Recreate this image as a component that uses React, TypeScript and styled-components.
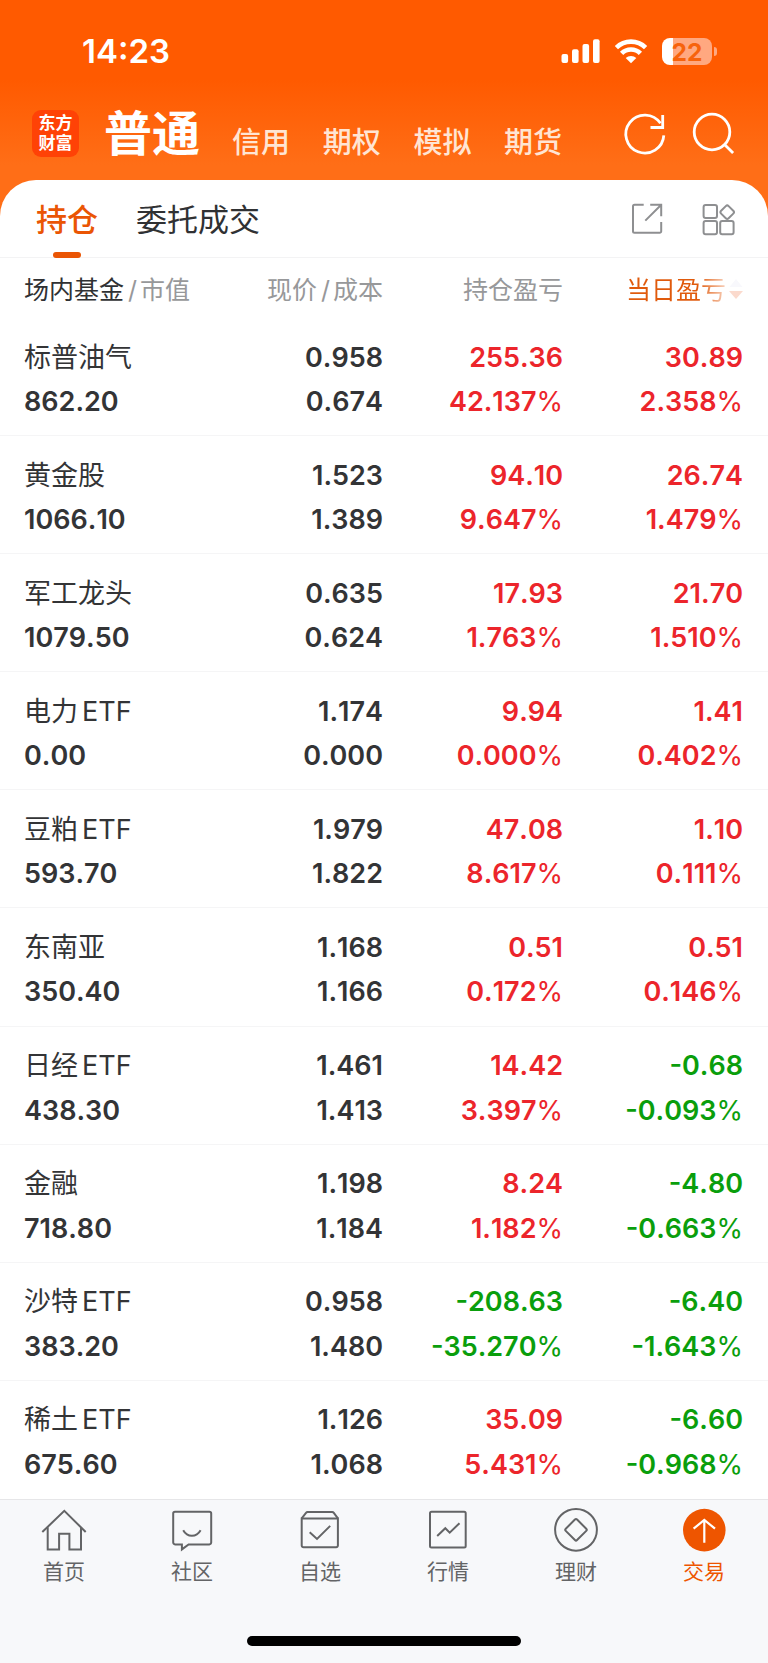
import React from 'react';
import styled, { createGlobalStyle } from 'styled-components';

const GlobalStyle = createGlobalStyle`
  * { box-sizing: border-box; }
  body {
    margin: 0;
    background: #fff;
    font-family: Inter, "Noto Sans CJK SC", sans-serif;
    color: #303133;
  }
`;

const Screen = styled.div`
  width: 768px;
  height: 1663px;
  display: flex;
  flex-direction: column;
  overflow: hidden;
  background: linear-gradient(#ff5a00 0, #ff5a00 80px, #ff6e17 165px, #ff6e17 300px);
`;

const StatusBar = styled.div`
  height: 102px;
  flex: none;
  display: flex;
  justify-content: space-between;
  align-items: center;
  padding: 0 51px 0 82px;
  color: #fff;
`;

const Clock = styled.div`
  font-size: 33px;
  font-weight: 600;
  line-height: 40px;
`;

const StatusIcons = styled.div`
  display: flex;
  align-items: center;
  gap: 14px;
`;

const Battery = styled.div`
  display: flex;
  align-items: center;
  gap: 2px;
`;

const BatteryBody = styled.div`
  width: 50px;
  height: 27px;
  border-radius: 8px;
  background: linear-gradient(90deg, #fff 11.5px, #ffa880 11.5px);
  color: #f7630c;
  font-size: 24.5px;
  font-weight: 700;
  line-height: 28px;
  text-align: center;
`;

const BatteryTip = styled.div`
  width: 3px;
  height: 9px;
  border-radius: 0 4px 4px 0;
  background: #ffa880;
`;

const AccountBar = styled.header`
  height: 77.5px;
  flex: none;
  display: flex;
  align-items: flex-start;
  padding: 0 33px 0 32px;
  color: #fff;
`;

const Logo = styled.div`
  width: 47px;
  height: 47px;
  margin-top: 8px;
  padding-top: 3px;
  border-radius: 9px;
  background: #ff4206;
  font-size: 17px;
  font-weight: 700;
  line-height: 20px;
  text-align: center;
`;

const AccountTitle = styled.div`
  width: 128px;
  margin: 4px 0 0 25px;
  font-size: 48px;
  font-weight: 700;
  line-height: 56px;
`;

const AccountTab = styled.div`
  width: 90.7px;
  margin-top: 22px;
  font-size: 29px;
  font-weight: 500;
  line-height: 38px;
  color: #ffe5d3;
`;

const HeaderActions = styled.div`
  display: flex;
  gap: 23px;
  margin: 9px 0 0 auto;
`;

const Card = styled.main`
  height: 1319px;
  flex: none;
  background: #fff;
  border-radius: 36px 36px 0 0;
`;

const TabBar = styled.div`
  height: 78px;
  display: flex;
  justify-content: space-between;
  padding: 0 33px 0 36px;
  border-bottom: 1px solid #f3f3f4;
`;

const TabGroup = styled.div`
  display: flex;
  gap: 38px;
`;

const Tab = styled.div<{ $active?: boolean }>`
  display: flex;
  flex-direction: column;
  align-items: center;
  font-size: 31px;
  font-weight: ${(p) => (p.$active ? 500 : 400)};
  line-height: 80px;
  height: 79px;
  color: ${(p) => (p.$active ? '#ea5504' : '#303133')};
  &::after {
    content: '';
    width: 28px;
    height: 6px;
    margin-top: -7.5px;
    border-radius: 3px;
    background: ${(p) => (p.$active ? '#ea5504' : 'transparent')};
  }
`;

const TabActions = styled.div`
  display: flex;
  gap: 36px;
  padding-top: 22px;
`;

const GridRow = styled.div`
  display: grid;
  grid-template-columns: 1fr 180px 180px 180px;
  padding: 0 25px 0 24px;
`;

const TableHead = styled(GridRow)`
  height: 60.5px;
  font-size: 25px;
  line-height: 64px;
  color: #97989a;
`;

const HeadCell = styled.div<{ $right?: boolean }>`
  display: flex;
  justify-content: ${(p) => (p.$right ? 'flex-end' : 'flex-start')};
  height: 64px;
  white-space: nowrap;
`;

const Dark = styled.span`
  color: #303133;
`;

const Slash = styled.span`
  margin: 0 3px 0 4px;
`;

const SortCell = styled.div`
  display: flex;
  justify-content: flex-end;
  align-items: center;
  gap: 3px;
  height: 64px;
`;

const SortLabel = styled.span`
  background: linear-gradient(90deg, #e05a0c 72px, #fbe0d2 103px);
  background-clip: text;
  -webkit-background-clip: text;
  color: transparent;
`;

const HoldingRow = styled(GridRow)`
  height: 118.1px;
  padding-top: 17.5px;
  border-bottom: 1px solid #f5f5f6;
  &:last-child { border-bottom: 0; }
`;

const Cell = styled.div<{ $tone?: string; $right?: boolean }>`
  display: flex;
  flex-direction: column;
  align-items: ${(p) => (p.$right ? 'flex-end' : 'flex-start')};
  color: ${(p) => p.$tone ?? '#333436'};
`;

const Name = styled.div`
  font-size: 27px;
  line-height: 44.5px;
`;

const Latin = styled.span`
  margin-left: 4px;
`;

const Figure = styled.div`
  font-size: 27px;
  font-weight: 600;
  line-height: 44.5px;
  font-kerning: none;
`;

const Percent = styled.span`
  font-weight: 400;
`;

const BottomNav = styled.nav`
  height: 164px;
  flex: none;
  display: flex;
  flex-direction: column;
  align-items: center;
  justify-content: space-between;
  padding-bottom: 17px;
  border-top: 1.5px solid #e6e6e8;
  background: #f7f8fa;
`;

const NavItems = styled.div`
  width: 768px;
  display: grid;
  grid-template-columns: repeat(6, 128px);
`;

const NavItem = styled.div<{ $active?: boolean }>`
  display: flex;
  flex-direction: column;
  align-items: center;
  gap: 2px;
  padding-top: 6px;
  font-size: 21px;
  line-height: 32px;
  color: ${(p) => (p.$active ? '#ee5500' : '#636466')};
  svg { display: block; }
`;

const HomeIndicator = styled.div`
  width: 274px;
  height: 10px;
  border-radius: 5px;
  background: #000;
`;

const RED = '#ec252b';
const GREEN = '#0a9e0c';

const toneOf = (value: string) => (value.startsWith('-') ? GREEN : RED);

type Holding = {
  name: string;
  suffix?: string;
  value: string;
  price: string;
  cost: string;
  total: string;
  totalPct: string;
  day: string;
  dayPct: string;
};

const holdings: Holding[] = [
  { name: '标普油气', value: '862.20', price: '0.958', cost: '0.674', total: '255.36', totalPct: '42.137', day: '30.89', dayPct: '2.358' },
  { name: '黄金股', value: '1066.10', price: '1.523', cost: '1.389', total: '94.10', totalPct: '9.647', day: '26.74', dayPct: '1.479' },
  { name: '军工龙头', value: '1079.50', price: '0.635', cost: '0.624', total: '17.93', totalPct: '1.763', day: '21.70', dayPct: '1.510' },
  { name: '电力', suffix: 'ETF', value: '0.00', price: '1.174', cost: '0.000', total: '9.94', totalPct: '0.000', day: '1.41', dayPct: '0.402' },
  { name: '豆粕', suffix: 'ETF', value: '593.70', price: '1.979', cost: '1.822', total: '47.08', totalPct: '8.617', day: '1.10', dayPct: '0.111' },
  { name: '东南亚', value: '350.40', price: '1.168', cost: '1.166', total: '0.51', totalPct: '0.172', day: '0.51', dayPct: '0.146' },
  { name: '日经', suffix: 'ETF', value: '438.30', price: '1.461', cost: '1.413', total: '14.42', totalPct: '3.397', day: '-0.68', dayPct: '-0.093' },
  { name: '金融', value: '718.80', price: '1.198', cost: '1.184', total: '8.24', totalPct: '1.182', day: '-4.80', dayPct: '-0.663' },
  { name: '沙特', suffix: 'ETF', value: '383.20', price: '0.958', cost: '1.480', total: '-208.63', totalPct: '-35.270', day: '-6.40', dayPct: '-1.643' },
  { name: '稀土', suffix: 'ETF', value: '675.60', price: '1.126', cost: '1.068', total: '35.09', totalPct: '5.431', day: '-6.60', dayPct: '-0.968' },
];

const SignalIcon = () => (
  <svg width="39" height="25" viewBox="0 0 39 25" fill="#fff">
    <rect x="0.5" y="15" width="6.6" height="9" rx="2" />
    <rect x="11" y="10.3" width="6.6" height="13.7" rx="2" />
    <rect x="21.5" y="5" width="6.6" height="19" rx="2" />
    <rect x="32" y="0.2" width="6.6" height="23.8" rx="2" />
  </svg>
);

const WifiIcon = () => (
  <svg width="34" height="25" viewBox="0 0 34 25" fill="none" stroke="#fff" strokeWidth="4.6">
    <path d="M2.4 8.6a20.9 20.9 0 0 1 29.2 0" />
    <path d="M7.6 14.4a13.2 13.2 0 0 1 18.8 0" />
    <path d="M17 24.3l-5.3-5.2a7.6 7.6 0 0 1 10.6 0z" fill="#fff" stroke="none" />
  </svg>
);

const RefreshIcon = () => (
  <svg width="46" height="46" viewBox="0 0 46 46" fill="none" stroke="#fff" strokeWidth="2.8">
    <path d="M41.8 24.3A19 19 0 1 1 38.5 12.3" />
    <path d="M40.7 4v12.5H28.5" />
  </svg>
);

const SearchIcon = () => (
  <svg width="44" height="46" viewBox="0 0 44 46" fill="none" stroke="#fff" strokeWidth="2.8">
    <circle cx="21" cy="21" r="17.8" />
    <path d="M33.5 33.5l8.6 8.6" />
  </svg>
);

const ShareIcon = () => (
  <svg width="34" height="34" viewBox="0 0 34 34" fill="none" stroke="#8e8f91" strokeWidth="2">
    <path d="M12.7 2.8H3.5a1.5 1.5 0 0 0-1.5 1.5v25a1.5 1.5 0 0 0 1.5 1.5h25.2a1.5 1.5 0 0 0 1.5-1.5V20" />
    <path d="M19.2 2.8h11v11.4M30 3L14.3 18.6" />
  </svg>
);

const GridIcon = () => (
  <svg width="34" height="34" viewBox="0 0 34 34" fill="none" stroke="#8e8f91" strokeWidth="2">
    <rect x="2.6" y="2.9" width="13.4" height="13.2" rx="2" />
    <rect x="2.6" y="19.1" width="13.4" height="13.2" rx="2" />
    <rect x="19.2" y="19.1" width="13.4" height="13.2" rx="2" />
    <rect x="20.9" y="4.9" width="10.6" height="10.6" rx="2" transform="rotate(45 26.2 10.2)" />
  </svg>
);

const SortIcon = () => (
  <svg width="14" height="22" viewBox="0 0 14 22">
    <path d="M7 0l6.5 8H.5z" fill="#f8f8fc" />
    <path d="M0 12h14l-7 8z" fill="#fbdacd" />
  </svg>
);

const NavSvg = ({ children }: { children: React.ReactNode }) => (
  <svg width="48" height="48" viewBox="0 0 48 48" fill="none" stroke="#636466" strokeWidth="2">
    {children}
  </svg>
);

const navItems: { label: string; active?: boolean; icon: React.ReactNode }[] = [
  {
    label: '首页',
    icon: (
      <NavSvg>
        <path d="M2.3 26L24.3 4.9 45.7 26" />
        <path d="M7.7 21.2v22.4h11.4V27.8h10.3v15.8H41V21.2" />
      </NavSvg>
    ),
  },
  {
    label: '社区',
    icon: (
      <NavSvg>
        <path d="M7 5.8h34.4a1.8 1.8 0 0 1 1.8 1.8v29a1.8 1.8 0 0 1-1.8 1.8H20.6l-6.7 5v-5H7a1.8 1.8 0 0 1-1.8-1.8v-29A1.8 1.8 0 0 1 7 5.8z" />
        <path d="M15.2 24.2c4.2 7.4 13.2 7.4 17.4 0" />
      </NavSvg>
    ),
  },
  {
    label: '自选',
    icon: (
      <NavSvg>
        <path d="M5.7 12.4h36.2v27a1.8 1.8 0 0 1-1.8 1.8H7.5a1.8 1.8 0 0 1-1.8-1.8z" />
        <path d="M5.7 12.4L10 6.8a2 2 0 0 1 1.6-.8h24.6a2 2 0 0 1 1.6.8l4.1 5.6" />
        <path d="M13.7 26.2l7.3 6.7 13.2-13" />
      </NavSvg>
    ),
  },
  {
    label: '行情',
    icon: (
      <NavSvg>
        <rect x="6" y="5.8" width="35.7" height="35.6" rx="1.5" />
        <path d="M13.2 30l8.1-7.8 4.4 4.4 9.8-9.4" />
      </NavSvg>
    ),
  },
  {
    label: '理财',
    icon: (
      <NavSvg>
        <circle cx="24" cy="23.8" r="20.9" />
        <rect x="16" y="15.8" width="16" height="16" rx="1.5" transform="rotate(45 24 23.8)" />
      </NavSvg>
    ),
  },
  {
    label: '交易',
    active: true,
    icon: (
      <NavSvg>
        <circle cx="24.3" cy="24.1" r="21.3" fill="#ee5500" stroke="none" />
        <path d="M24.3 36.8V13.6M13.6 22.7l10.7-8.8L35 22.7" stroke="#fff" strokeWidth="2.2" />
      </NavSvg>
    ),
  },
];

const Pct = ({ value }: { value: string }) => (
  <Figure>
    {value}
    <Percent>%</Percent>
  </Figure>
);

export default function App() {
  return (
    <Screen>
      <GlobalStyle />
      <StatusBar>
        <Clock>14:23</Clock>
        <StatusIcons>
          <SignalIcon />
          <WifiIcon />
          <Battery>
            <BatteryBody>22</BatteryBody>
            <BatteryTip />
          </Battery>
        </StatusIcons>
      </StatusBar>
      <AccountBar>
        <Logo>
          东方
          <br />
          财富
        </Logo>
        <AccountTitle>普通</AccountTitle>
        {['信用', '期权', '模拟', '期货'].map((label) => (
          <AccountTab key={label}>{label}</AccountTab>
        ))}
        <HeaderActions>
          <RefreshIcon />
          <SearchIcon />
        </HeaderActions>
      </AccountBar>
      <Card>
        <TabBar>
          <TabGroup>
            <Tab $active>持仓</Tab>
            <Tab>委托成交</Tab>
          </TabGroup>
          <TabActions>
            <ShareIcon />
            <GridIcon />
          </TabActions>
        </TabBar>
        <TableHead>
          <HeadCell>
            <Dark>场内基金</Dark>
            <Slash>/</Slash>市值
          </HeadCell>
          <HeadCell $right>
            现价<Slash>/</Slash>成本
          </HeadCell>
          <HeadCell $right>持仓盈亏</HeadCell>
          <SortCell>
            <SortLabel>当日盈亏</SortLabel>
            <SortIcon />
          </SortCell>
        </TableHead>
        <div>
          {holdings.map((h) => (
            <HoldingRow key={h.name}>
              <Cell>
                <Name>
                  {h.name}
                  {h.suffix && <Latin>{h.suffix}</Latin>}
                </Name>
                <Figure>{h.value}</Figure>
              </Cell>
              <Cell $right>
                <Figure>{h.price}</Figure>
                <Figure>{h.cost}</Figure>
              </Cell>
              <Cell $right $tone={toneOf(h.total)}>
                <Figure>{h.total}</Figure>
                <Pct value={h.totalPct} />
              </Cell>
              <Cell $right $tone={toneOf(h.day)}>
                <Figure>{h.day}</Figure>
                <Pct value={h.dayPct} />
              </Cell>
            </HoldingRow>
          ))}
        </div>
      </Card>
      <BottomNav>
        <NavItems>
          {navItems.map((item) => (
            <NavItem key={item.label} $active={item.active}>
              {item.icon}
              {item.label}
            </NavItem>
          ))}
        </NavItems>
        <HomeIndicator />
      </BottomNav>
    </Screen>
  );
}
